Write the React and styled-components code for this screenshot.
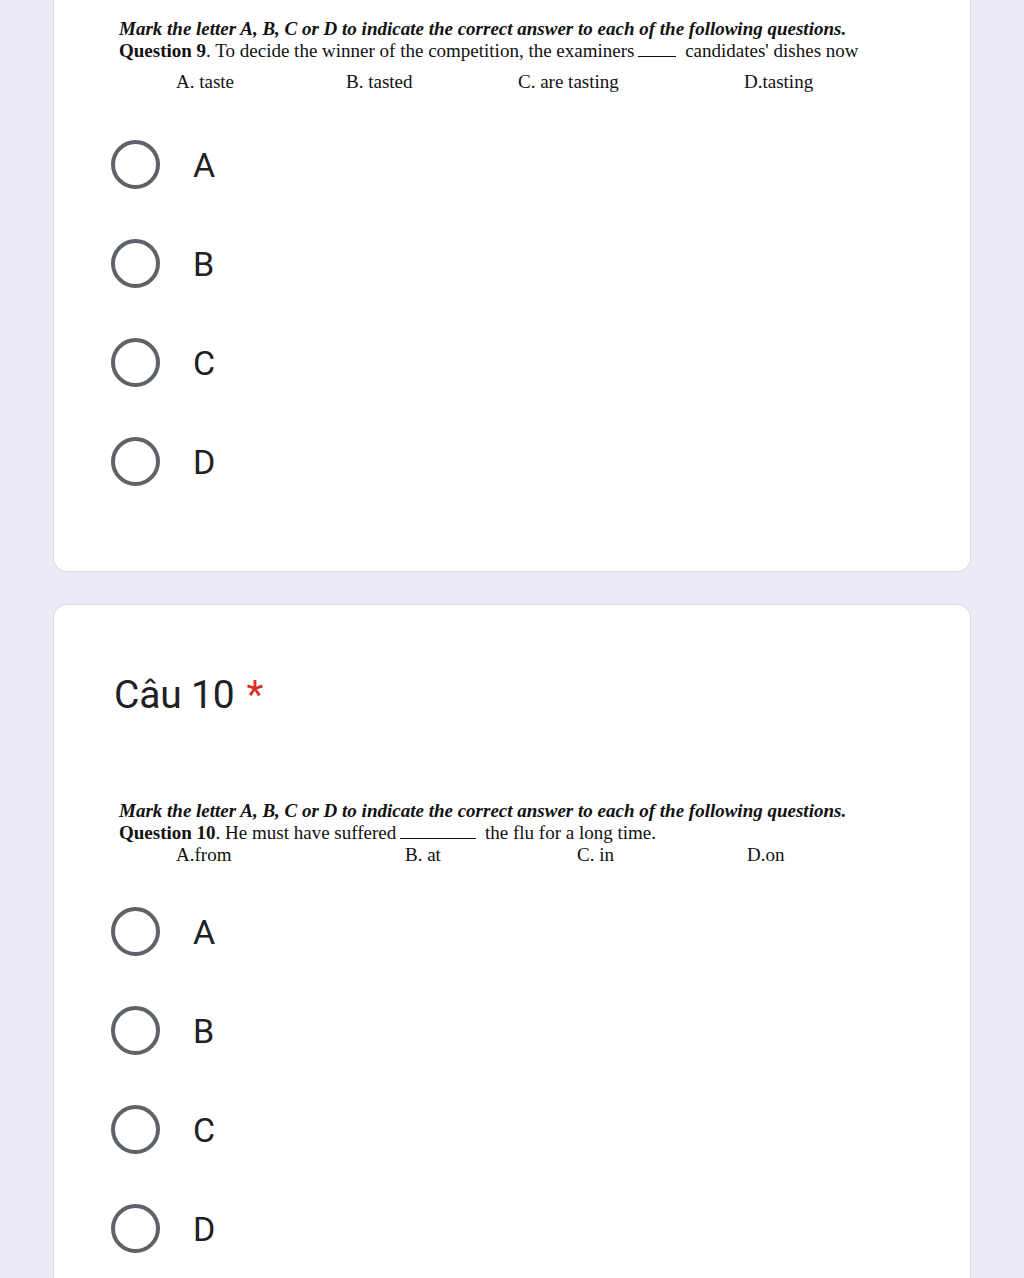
import React from 'react'
import styled, { createGlobalStyle } from 'styled-components'

const Global = createGlobalStyle`
  html, body {
    margin: 0;
    padding: 0;
    background: #ede9f7;
  }
  body {
    font-family: Roboto, 'Noto Sans', sans-serif;
  }
`

const Page = styled.div`
  display: flex;
  flex-direction: column;
  gap: 32px;
  padding: 0 53px;
  height: 1278px;
  overflow: hidden;
`

const Card = styled.div`
  background: #fff;
  border: 1.5px solid #dcd9e2;
  border-radius: 14px;
  padding: ${(p) => p.pad || '0'};
  ${(p) => p.open === 'top' && `
    border-top: none;
    border-top-left-radius: 0;
    border-top-right-radius: 0;
  `}
  ${(p) => p.open === 'bottom' && `
    border-bottom: none;
    border-bottom-left-radius: 0;
    border-bottom-right-radius: 0;
    flex: 1;
  `}
`

const Title = styled.div`
  font-size: 39px;
  color: #202124;
  padding-left: 60px;
  height: 72px;
  display: flex;
  align-items: center;
  letter-spacing: -0.2px;

  span {
    color: #d93025;
    margin-left: 12px;
  }
`

const Question = styled.div`
  font-family: 'Liberation Serif', serif;
  color: #111;
  padding-left: ${(p) => (p.flush ? '0' : '65px')};
  font-size: 19px;
  line-height: 22px;
  white-space: nowrap;

  .lead {
    font-weight: bold;
    font-style: italic;
  }
  b {
    font-weight: bold;
  }
`

const Choices = styled.div`
  display: grid;
  grid-template-columns: ${(p) => p.cols};
  padding-left: 57px;
  margin-top: ${(p) => p.mt || '0'};
`

const Options = styled.div`
  display: flex;
  flex-direction: column;
  padding-left: 57px;
  margin-top: ${(p) => p.mt || '0'};
`

const Option = styled.label`
  display: flex;
  align-items: center;
  height: 99px;
  font-size: 34px;
  color: #202124;
`

const Radio = styled.span`
  width: 41px;
  height: 41px;
  border: 4px solid #5f6368;
  border-radius: 50%;
  margin-right: 33px;
  flex-shrink: 0;
`

const Blank = styled.span`
  display: inline-block;
  width: ${(p) => p.w};
  border-bottom: 1px solid #111;
  margin: 0 4px;
`

const OptionList = () => (
  <>
    {['A', 'B', 'C', 'D'].map((l) => (
      <Option key={l}>
        <Radio />
        {l}
      </Option>
    ))}
  </>
)

export default function App() {
  return (
    <>
      <Global />
      <Page>
        <Card open='top' pad='18px 0 60px'>
          <Question>
            <div className='lead'>
              Mark the letter A, B, C or D to indicate the correct answer to each of the following questions.
            </div>
            <div>
              <b>Question 9</b>. To decide the winner of the competition, the examiners
              <Blank w='38px' /> candidates' dishes now
            </div>
          </Question>
          <Choices cols='235px 172px 226px 1fr' mt='9px'>
            <Question>A. taste</Question>
            <Question flush>B. tasted</Question>
            <Question flush>C. are tasting</Question>
            <Question flush>D.tasting</Question>
          </Choices>
          <Options mt='22px'>
            <OptionList />
          </Options>
        </Card>
        <Card open='bottom' pad='54px 0 0'>
          <Title>
            Câu 10<span>*</span>
          </Title>
          <Question style={{ marginTop: 69 }}>
            <div className='lead'>
              Mark the letter A, B, C or D to indicate the correct answer to each of the following questions.
            </div>
            <div>
              <b>Question 10</b>. He must have suffered<Blank w='76px' /> the flu for a long time.
            </div>
          </Question>
          <Choices cols='294px 172px 170px 1fr'>
            <Question>A.from</Question>
            <Question flush>B. at</Question>
            <Question flush>C. in</Question>
            <Question flush>D.on</Question>
          </Choices>
          <Options mt='16px'>
            <OptionList />
          </Options>
        </Card>
      </Page>
    </>
  )
}
